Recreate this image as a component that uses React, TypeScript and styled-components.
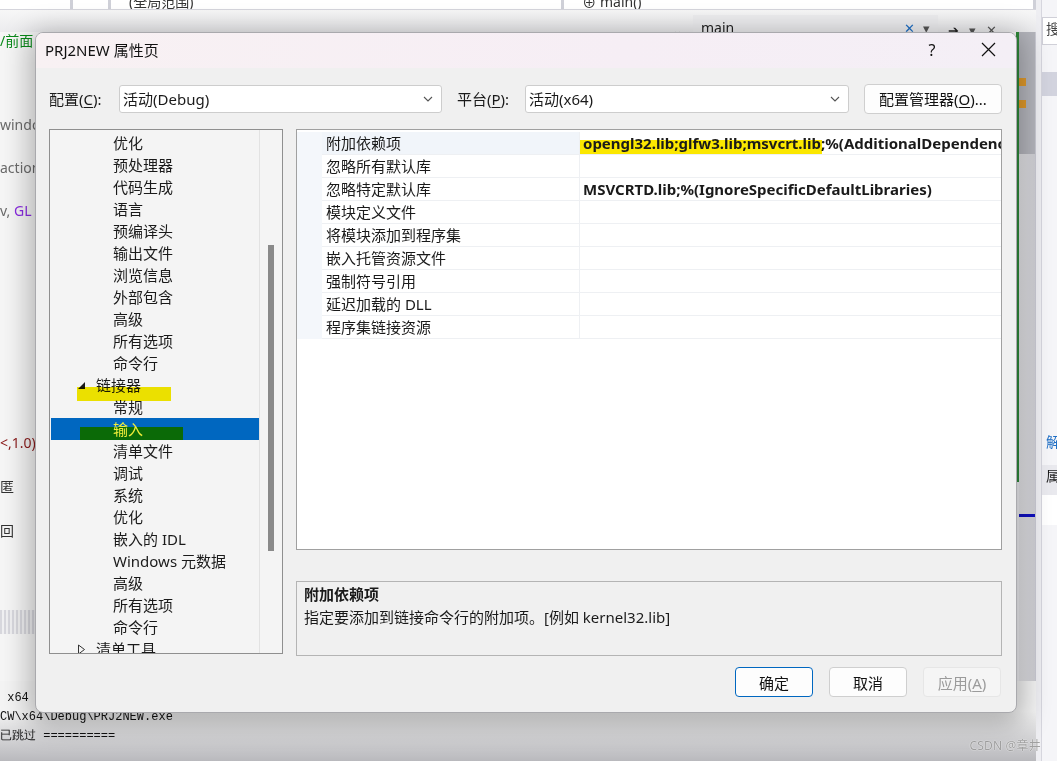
import React from "react";
import styled, { createGlobalStyle, css } from "styled-components";

const GlobalStyle = createGlobalStyle`
  html, body {
    margin: 0;
    padding: 0;
    overflow: hidden;
  }
  body {
    font-family: "Noto Sans", "Noto Sans CJK SC", sans-serif;
    color: #1a1a1a;
  }
`;

const UI_FONT = `"Noto Sans", "Noto Sans CJK SC", sans-serif`;

// ---------- background IDE ----------

const Desktop = styled.div`
  position: relative;
  width: 1057px;
  height: 761px;
  overflow: hidden;
  display: flex;
  background: #eeeef2;
`;

const MainColumn = styled.div`
  width: 1036px;
  display: flex;
  flex-direction: column;
`;

const NavStrip = styled.div`
  height: 9px;
  display: flex;
  background: #ffffff;
  border-bottom: 1px solid #d5d5dc;
  overflow: hidden;
`;

const NavCell = styled.div<{ $w: number }>`
  width: ${(p) => p.$w}px;
  border-right: 3px solid #cfd0d8;
  display: flex;
  align-items: flex-end;
  padding-left: 18px;
  font-size: 14px;
  line-height: 14px;
  color: #333;
  overflow: hidden;
  white-space: nowrap;
`;

const TabStrip = styled.div`
  height: 22px;
  display: flex;
  align-items: flex-end;
  background: linear-gradient(#f7f7f7, #ececee);
  padding-left: 672px;
  gap: 10px;
  font-size: 14px;
  color: #555;
  overflow: hidden;
`;

const DocTab = styled.div`
  width: 245px;
  height: 17px;
  box-sizing: border-box;
  background: #eeeef0;
  display: flex;
  align-items: flex-start;
  padding: 5px 8px 0 8px;
  gap: 8px;
  line-height: 16px;
  color: #222;
  overflow: hidden;
`;

const TabGlyph = styled.span<{ $color?: string }>`
  font-size: 13px;
  line-height: 16px;
  margin-bottom: -6px;
  color: ${(p) => p.$color ?? "#555"};
`;

const Workspace = styled.div`
  flex: 1;
  display: flex;
`;

const Editor = styled.div`
  flex: 1;
  display: flex;
  flex-direction: column;
  background: #f6f6f6;
  font-size: 14px;
  color: #6b6b6b;
`;

const CodeLine = styled.div<{ $h: number }>`
  height: ${(p) => p.$h}px;
  display: flex;
  align-items: flex-end;
  white-space: nowrap;
  overflow: hidden;
`;

const Tok = styled.span<{ $c: string }>`
  color: ${(p) => p.$c};
`;

const Splitter = styled.div`
  height: 24px;
  background: repeating-linear-gradient(90deg, #d8d8de 0 2px, #f0f0f2 2px 4px);
  margin-top: 70px;
`;

const EditorGutterLine = styled.div`
  width: 3px;
  background: linear-gradient(#2f8a3a 0 450px, transparent 450px);
`;

const VScroll = styled.div`
  width: 16px;
  display: flex;
  flex-direction: column;
  background: linear-gradient(90deg, #e6e6ea, #cfcfd4);
  border-right: 1px solid #c9c9d2;
`;

const ScrollThumb = styled.div`
  height: 76px;
  background: #b4b5bc;
  display: flex;
  flex-direction: column;
  gap: 14px;
  padding-top: 46px;
`;

const Marker = styled.div`
  width: 7px;
  height: 8px;
  background: #e09a2c;
`;

const BlueRule = styled.div`
  height: 3px;
  background: #1010c0;
  margin-top: 360px;
`;

const SidePanel = styled.div`
  flex: 1;
  margin-left: 5px;
  display: flex;
  flex-direction: column;
  background: #f5f5f8;
  border-left: 1px solid #d6d6de;
`;

const SideSearch = styled.div`
  margin-top: 17px;
  height: 26px;
  background: #fff;
  border: 1px solid #d0d0d8;
  border-right: none;
  font-size: 14px;
  padding-left: 3px;
  color: #444;
`;

const SideBand = styled.div<{ $h: number; $bg: string; $mt?: number }>`
  height: ${(p) => p.$h}px;
  background: ${(p) => p.$bg};
  margin-top: ${(p) => p.$mt ?? 0}px;
  font-size: 14px;
  padding-left: 4px;
  overflow: hidden;
`;

const Output = styled.div`
  height: 80px;
  box-sizing: border-box;
  background: linear-gradient(#f4f4f4 0 30px, #b9b9bd);
  font-family: "Liberation Mono", monospace;
  font-size: 12px;
  line-height: 19px;
  color: #111;
  padding-top: 8px;
  white-space: nowrap;
`;

const Watermark = styled.div`
  position: absolute;
  right: 16px;
  bottom: 7px;
  font-size: 12px;
  color: rgba(150, 150, 150, 0.9);
  text-shadow: 0 0 1px #fff, 0 0 1px #fff;
  letter-spacing: 0.2px;
`;

// ---------- dialog ----------

const Dialog = styled.div`
  position: absolute;
  left: 35px;
  top: 32px;
  width: 982px;
  height: 681px;
  box-sizing: border-box;
  border: 1px solid #a9a9ad;
  border-radius: 8px;
  background: #f0f0f0;
  box-shadow: 0 6px 28px 6px rgba(0, 0, 0, 0.28);
  display: flex;
  flex-direction: column;
  overflow: hidden;
  font-family: ${UI_FONT};
`;

const TitleBar = styled.div`
  height: 35px;
  display: flex;
  align-items: center;
  padding-left: 9px;
  padding-bottom: 2px;
  box-sizing: border-box;
  background: linear-gradient(90deg, #f8f1f3, #f6eef5 60%, #f4eff6);
  font-size: 15px;
  color: #111;
`;

const TitleText = styled.div`
  flex: 1;
`;

const TitleButton = styled.div`
  width: 56px;
  height: 33px;
  display: flex;
  align-items: center;
  justify-content: center;
  font-size: 16px;
  color: #111;
`;

const Body = styled.div`
  flex: 1;
  display: flex;
  flex-direction: column;
  padding: 16px 14px 14px 13px;
`;

const ConfigRow = styled.div`
  height: 29px;
  display: flex;
  align-items: center;
`;

const FieldLabel = styled.div<{ $w: number }>`
  width: ${(p) => p.$w}px;
  font-size: 15px;
`;

const Key = styled.span`
  text-decoration: underline;
  text-underline-offset: 2px;
`;

const Select = styled.div<{ $w: number }>`
  width: ${(p) => p.$w}px;
  height: 28px;
  box-sizing: border-box;
  background: #fff;
  border: 1px solid #cdcdcd;
  border-radius: 3px;
  display: flex;
  align-items: center;
  padding: 0 8px 0 3px;
  font-size: 15px;
  margin-right: 15px;
`;

const SelectText = styled.div`
  flex: 1;
`;

const PushButton = styled.button<{ $variant?: "default" | "disabled" | "normal"; $w?: number }>`
  width: ${(p) => p.$w ?? 78}px;
  height: 30px;
  box-sizing: border-box;
  background: #fdfdfd;
  border: 1px solid #cfcfcf;
  border-radius: 4px;
  font-family: ${UI_FONT};
  font-size: 15px;
  color: #111;
  padding: 0;
  ${(p) =>
    p.$variant === "default" &&
    css`
      border-color: #0067c0;
    `}
  ${(p) =>
    p.$variant === "disabled" &&
    css`
      background: #f5f5f5;
      border-color: #e6e6e6;
      color: #9b9b9b;
    `}
`;

const Main = styled.div`
  margin-top: 16px;
  display: flex;
  gap: 13px;
`;

const TreePanel = styled.div`
  width: 234px;
  height: 525px;
  box-sizing: border-box;
  border: 1px solid #8f8f8f;
  background: #f4f4f4;
  display: flex;
  overflow: hidden;
`;

const TreeList = styled.div`
  flex: 1;
  padding: 2px 0 0 1px;
  overflow: hidden;
`;

const TreeRow = styled.div<{ $level: number; $selected?: boolean }>`
  position: relative;
  height: 22px;
  display: flex;
  align-items: center;
  padding-left: ${(p) => (p.$level === 1 ? 26 : 62)}px;
  font-size: 15px;
  line-height: 21px;
  white-space: nowrap;
  ${(p) =>
    p.$selected &&
    css`
      background: #0067c0;
      color: #f2ef3a;
    `}
`;

const Expander = styled.span`
  width: 19px;
  display: flex;
  align-items: center;
`;

const RowLabel = styled.span`
  position: relative;
  z-index: 1;
`;

const Highlighter = styled.div<{ $left: number; $top: number; $w: number; $h: number; $color: string; $blend?: boolean }>`
  position: absolute;
  left: ${(p) => p.$left}px;
  top: ${(p) => p.$top}px;
  width: ${(p) => p.$w}px;
  height: ${(p) => p.$h}px;
  background: ${(p) => p.$color};
  ${(p) =>
    p.$blend &&
    css`
      mix-blend-mode: multiply;
      z-index: 2;
    `}
`;

const TreeScroll = styled.div`
  width: 22px;
  border-left: 1px solid #e2e2e2;
  display: flex;
  justify-content: center;
  padding-top: 115px;
`;

const TreeThumb = styled.div`
  width: 6px;
  height: 306px;
  background: #8a8a8a;
`;

const RightColumn = styled.div`
  flex: 1;
  display: flex;
  flex-direction: column;
`;

const GridPanel = styled.div`
  height: 421px;
  box-sizing: border-box;
  border: 1px solid #a0a0a0;
  background: #ffffff;
  padding-top: 2px;
  overflow: hidden;
`;

const PropRow = styled.div`
  position: relative;
  height: 23px;
  display: grid;
  grid-template-columns: 25px 258px 1fr;
  font-size: 15px;
  line-height: 22px;
  white-space: nowrap;
`;

const Gutter = styled.div`
  background: #f4f7fb;
`;

const NameCell = styled.div<{ $active?: boolean }>`
  padding-left: 4px;
  border-bottom: 1px solid #eef0f3;
  border-right: 1px solid #eef0f3;
  background: ${(p) => (p.$active ? "#f1f5fa" : "#ffffff")};
`;

const ValueCell = styled.div`
  padding-left: 3px;
  border-bottom: 1px solid #eef0f3;
  font-weight: 700;
  overflow: hidden;
  position: relative;
`;

const ValueText = styled.span`
  position: relative;
  z-index: 1;
`;

const DescPanel = styled.div`
  margin-top: 31px;
  height: 75px;
  box-sizing: border-box;
  border: 1px solid #b4b4b4;
  background: #f0f0f0;
  padding: 1px 7px 0;
  font-size: 15px;
  line-height: 23px;
`;

const DescTitle = styled.div`
  font-weight: 700;
`;

const ButtonRow = styled.div`
  margin-top: 11px;
  display: flex;
  justify-content: flex-end;
  gap: 16px;
  padding-right: 1px;
`;

// ---------- data ----------

type TreeItem = {
  label: string;
  level: 1 | 2;
  expander?: "open" | "closed";
  selected?: boolean;
};

const treeItems: TreeItem[] = [
  { label: "优化", level: 2 },
  { label: "预处理器", level: 2 },
  { label: "代码生成", level: 2 },
  { label: "语言", level: 2 },
  { label: "预编译头", level: 2 },
  { label: "输出文件", level: 2 },
  { label: "浏览信息", level: 2 },
  { label: "外部包含", level: 2 },
  { label: "高级", level: 2 },
  { label: "所有选项", level: 2 },
  { label: "命令行", level: 2 },
  { label: "链接器", level: 1, expander: "open" },
  { label: "常规", level: 2 },
  { label: "输入", level: 2, selected: true },
  { label: "清单文件", level: 2 },
  { label: "调试", level: 2 },
  { label: "系统", level: 2 },
  { label: "优化", level: 2 },
  { label: "嵌入的 IDL", level: 2 },
  { label: "Windows 元数据", level: 2 },
  { label: "高级", level: 2 },
  { label: "所有选项", level: 2 },
  { label: "命令行", level: 2 },
  { label: "清单工具", level: 1, expander: "closed" },
];

const props: { name: string; value?: string }[] = [
  { name: "附加依赖项", value: "opengl32.lib;glfw3.lib;msvcrt.lib;%(AdditionalDependencies)" },
  { name: "忽略所有默认库" },
  { name: "忽略特定默认库", value: "MSVCRTD.lib;%(IgnoreSpecificDefaultLibraries)" },
  { name: "模块定义文件" },
  { name: "将模块添加到程序集" },
  { name: "嵌入托管资源文件" },
  { name: "强制符号引用" },
  { name: "延迟加载的 DLL" },
  { name: "程序集链接资源" },
];

const Chevron = () => (
  <svg width="10" height="6" viewBox="0 0 10 6">
    <polyline points="1,1 5,5 9,1" fill="none" stroke="#555" strokeWidth="1.1" />
  </svg>
);

const CloseIcon = () => (
  <svg width="15" height="15" viewBox="0 0 15 15">
    <path d="M1 1 L14 14 M14 1 L1 14" stroke="#111" strokeWidth="1.2" />
  </svg>
);

const ExpandGlyph = ({ open }: { open: boolean }) =>
  open ? (
    <svg width="9" height="9" viewBox="0 0 9 9">
      <polygon points="8,1 8,8 1,8" fill="#1a1a1a" />
    </svg>
  ) : (
    <svg width="9" height="11" viewBox="0 0 9 11">
      <polygon points="1.5,1 7.5,5.5 1.5,10" fill="none" stroke="#333" strokeWidth="1" />
    </svg>
  );

function App() {
  return (
    <Desktop>
      <GlobalStyle />
      <MainColumn>
        <NavStrip>
          <NavCell $w={57} />
          <NavCell $w={18} />
          <NavCell $w={470}>(全局范围)</NavCell>
          <NavCell $w={490}>⊕ main()</NavCell>
        </NavStrip>
        <TabStrip>
          <TabGlyph>⌄</TabGlyph>
          <DocTab>
            <span style={{ flex: 1 }}>main</span>
            <TabGlyph $color="#1f6fc5">✕</TabGlyph>
            <TabGlyph>▾</TabGlyph>
          </DocTab>
          <TabGlyph $color="#222">➔</TabGlyph>
          <TabGlyph>▾</TabGlyph>
          <TabGlyph>✕</TabGlyph>
        </TabStrip>
        <Workspace>
          <Editor>
            <CodeLine $h={18}>
              <Tok $c="#0a8a1a">/前面</Tok>
            </CodeLine>
            <CodeLine $h={84}>windo</CodeLine>
            <CodeLine $h={43}>action</CodeLine>
            <CodeLine $h={43}>
              v,&nbsp;<Tok $c="#8a2be2">GL</Tok>
            </CodeLine>
            <CodeLine $h={232}>
              <Tok $c="#8b1a1a">&lt;,1.0)</Tok>
            </CodeLine>
            <CodeLine $h={44}>
              <Tok $c="#333">匿</Tok>
            </CodeLine>
            <CodeLine $h={44}>
              <Tok $c="#333">回</Tok>
            </CodeLine>
            <Splitter />
          </Editor>
          <EditorGutterLine />
          <VScroll>
            <ScrollThumb>
              <Marker />
              <Marker />
            </ScrollThumb>
            <BlueRule />
          </VScroll>
        </Workspace>
        <Output>
          <div>&nbsp;x64</div>
          <div>CW\x64\Debug\PRJ2NEW.exe</div>
          <div>已跳过 ==========</div>
        </Output>
      </MainColumn>
      <SidePanel>
        <SideSearch>搜</SideSearch>
        <SideBand $h={24} $bg="#d2d3de" $mt={27} />
        <SideBand $h={24} $bg="transparent" $mt={335}>
          <Tok $c="#1f6fc5">解</Tok>
        </SideBand>
        <SideBand $h={30} $bg="#e9e9ee" $mt={10}>
          属
        </SideBand>
        <SideBand $h={30} $bg="#ffffff" />
      </SidePanel>
      <Watermark>CSDN @章井</Watermark>

      <Dialog>
        <TitleBar>
          <TitleText>PRJ2NEW 属性页</TitleText>
          <TitleButton>?</TitleButton>
          <TitleButton>
            <CloseIcon />
          </TitleButton>
        </TitleBar>
        <Body>
          <ConfigRow>
            <FieldLabel $w={70}>
              配置(<Key>C</Key>):
            </FieldLabel>
            <Select $w={323}>
              <SelectText>活动(Debug)</SelectText>
              <Chevron />
            </Select>
            <FieldLabel $w={68}>
              平台(<Key>P</Key>):
            </FieldLabel>
            <Select $w={324}>
              <SelectText>活动(x64)</SelectText>
              <Chevron />
            </Select>
            <PushButton $w={138}>
              配置管理器(<Key>O</Key>)...
            </PushButton>
          </ConfigRow>

          <Main>
            <TreePanel>
              <TreeList>
                {treeItems.map((item, i) => (
                  <TreeRow key={i} $level={item.level} $selected={item.selected}>
                    {item.expander && (
                      <Expander>
                        <ExpandGlyph open={item.expander === "open"} />
                      </Expander>
                    )}
                    {item.label === "链接器" && (
                      <Highlighter $left={26} $top={13} $w={94} $h={14} $color="#f6ea00" $blend />
                    )}
                    {item.selected && (
                      <Highlighter $left={29} $top={9} $w={103} $h={13} $color="#0b6a07" />
                    )}
                    <RowLabel>{item.label}</RowLabel>
                  </TreeRow>
                ))}
              </TreeList>
              <TreeScroll>
                <TreeThumb />
              </TreeScroll>
            </TreePanel>

            <RightColumn>
              <GridPanel>
                {props.map((p, i) => (
                  <PropRow key={p.name}>
                    <Gutter />
                    <NameCell $active={i === 0}>{p.name}</NameCell>
                    <ValueCell>
                      {i === 0 && (
                        <Highlighter $left={-10} $top={8} $w={252} $h={15} $color="#fbe700" />
                      )}
                      <ValueText>{p.value}</ValueText>
                    </ValueCell>
                  </PropRow>
                ))}
              </GridPanel>
              <DescPanel>
                <DescTitle>附加依赖项</DescTitle>
                <div>指定要添加到链接命令行的附加项。[例如 kernel32.lib]</div>
              </DescPanel>
            </RightColumn>
          </Main>

          <ButtonRow>
            <PushButton $variant="default">确定</PushButton>
            <PushButton>取消</PushButton>
            <PushButton $variant="disabled">
              应用(<Key>A</Key>)
            </PushButton>
          </ButtonRow>
        </Body>
      </Dialog>
    </Desktop>
  );
}

export default App;
